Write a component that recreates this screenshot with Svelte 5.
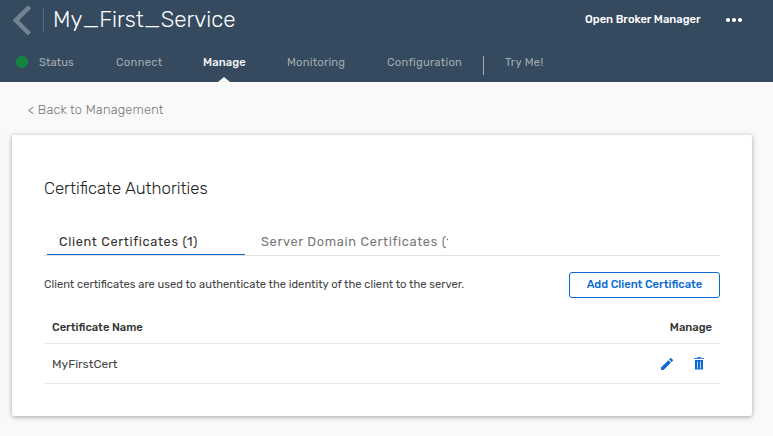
<script>
  const nav = [
    { label: 'Status', width: 77, spacing: 0.1 },
    { label: 'Connect', width: 87, spacing: 0.33 },
    { label: 'Manage', width: 84, spacing: 0.1, active: true },
    { label: 'Monitoring', width: 100, spacing: 0.22 },
    { label: 'Configuration', width: 96, spacing: 0.28 }
  ];
  const certificates = ['MyFirstCert'];
</script>

<div class="page">
  <header>
    <div class="top">
      <svg class="back" width="20" height="32" viewBox="0 0 20 32"><path d="M17.5 2.5 3.8 16 17.5 29.5" transform="translate(0 .3)" fill="none" stroke="#748392" stroke-width="4.5" /></svg>
      <span class="rule"></span>
      <h1>My_First_Service</h1>
      <span class="broker">Open Broker Manager</span>
      <svg class="dots" width="18" height="6" viewBox="0 0 18 6" fill="#fff"><circle cx="3" cy="3" r="2.1" /><circle cx="9" cy="3" r="2.1" /><circle cx="15" cy="3" r="2.1" /></svg>
    </div>
    <nav>
      <span class="status"></span>
      {#each nav as item}
        <span class="item" class:active={item.active} style="width:{item.width}px;letter-spacing:{item.spacing}px">{item.label}</span>
      {/each}
      <span class="split"></span>
      <span class="item try">Try Me!</span>
    </nav>
  </header>

  <div class="crumb">&lt; Back to Management</div>

  <main>
    <h2>Certificate Authorities</h2>
    <div class="tabs">
      <div class="tab selected">Client Certificates (1)</div>
      <div class="tab second">Server Domain Certificates (1)</div>
    </div>
    <div class="intro">
      <p>Client certificates are used to authenticate the identity of the client to the server.</p>
      <button>Add Client Certificate</button>
    </div>
    <div class="row head">
      <span class="colname">Certificate Name</span>
      <span class="colmanage">Manage</span>
    </div>
    {#each certificates as name}
      <div class="row body">
        <span class="cert">{name}</span>
        <svg class="edit" width="12" height="12" viewBox="3 3 18 18" fill="#0b6bd3"><path d="M3 17.25V21h3.75L17.81 9.94l-3.75-3.75L3 17.25zM20.71 7.04a1 1 0 0 0 0-1.41l-2.34-2.34a1 1 0 0 0-1.41 0l-1.83 1.83 3.75 3.75 1.83-1.83z" /></svg>
        <svg class="trash" width="10" height="13" viewBox="0 0 10 13"><path d="M3 0h4v1h3v1H0V1h3z" fill="#3987dc" /><path d="M1 3h8v9.5H1z" fill="#0b6bd3" /><path d="M3.5 4.5v7M6.5 4.5v7" stroke="#b5d3f2" /></svg>
      </div>
    {/each}
  </main>
</div>

<style>
  :global(body) { background: #f9f9f9; overflow: hidden; }
  .page { width: 773px; height: 436px; background: #f9f9f9; font-family: Rubik, Roboto, sans-serif; color: #333; overflow: hidden; }
  .page, .page * { box-sizing: border-box; }
  h1, h2, p { margin: 0; font-weight: 400; }
  span, h1, h2, p, .tab, .crumb, button { white-space: nowrap; }
  header { height: 82px; background: #364a5f; }
  .top { height: 40px; display: flex; align-items: center; padding-left: 12px; }
  .back { flex: none; }
  .rule { width: 1px; height: 24px; margin-left: 11px; background: #586878; }
  h1 { width: 532px; margin-left: 9px; font-size: 22.4px; font-weight: 300; line-height: 38px; color: #fff; }
  .broker { width: 140px; padding-bottom: 1px; font-size: 11.2px; font-weight: 500; color: #fff; }
  .dots { flex: none; }
  nav { height: 42px; display: flex; padding-left: 16px; }
  .status { width: 12px; height: 12px; margin: 16px 11px 0 0; border-radius: 50%; background: #14853f; }
  .item { position: relative; height: 42px; line-height: 45px; font-size: 11.2px; font-weight: 400; color: #a1aab2; }
  .active { color: #f0f2f4; font-weight: 500; }
  .active::after { content: ''; position: absolute; left: 15px; bottom: 0; border: 6px solid transparent; border-top: 0; border-bottom: 5px solid #f9f9f9; }
  .split { width: 1px; height: 19px; margin: 16px 21px 0 0; background: #a4adb5; }
  .try { letter-spacing: 0.3px; }
  .crumb { padding: 18px 0 0 28px; height: 53px; font-size: 12.8px; line-height: 20px; letter-spacing: 0.2px; font-weight: 300; color: #777; }
  main { width: 740px; height: 281px; margin-left: 12px; padding: 41px 32px 0; background: #fff; border-radius: 2px; box-shadow: 0 1px 5px rgba(0, 0, 0, 0.34); }
  h2 { height: 51px; font-size: 16.8px; font-weight: 300; line-height: 24px; color: #222; }
  .tabs { display: flex; height: 29px; padding-left: 3px; border-bottom: 1px solid #e1e1e1; }
  .tab { height: 28px; font-size: 12.8px; font-weight: 400; line-height: 29px; letter-spacing: 0.66px; }
  .selected { width: 198px; padding-left: 12px; color: #333; border-bottom: 1px solid #0b6bd3; }
  .second { width: 187px; margin-left: 16px; overflow: hidden; color: #777; }
  .intro { display: flex; align-items: center; justify-content: space-between; height: 58px; }
  p { padding-bottom: 1px; font-size: 11.2px; color: #444; }
  button { width: 151px; height: 26px; margin: 0; padding: 0 0 1px; border: 1px solid #0b6bd3; border-radius: 3px; background: #fff; color: #0b6bd3; font: 500 11.2px Rubik, Roboto, sans-serif; }
  .row { display: flex; align-items: center; padding: 0 8px; border-bottom: 1px solid #e9e9e9; }
  .head { height: 30px; justify-content: space-between; font-size: 11.2px; font-weight: 500; padding-bottom: 2px; }
  .body { height: 40px; }
  .cert { width: 609px; font-size: 12px; color: #444; }
  .trash { margin-left: 21px; }
</style>
